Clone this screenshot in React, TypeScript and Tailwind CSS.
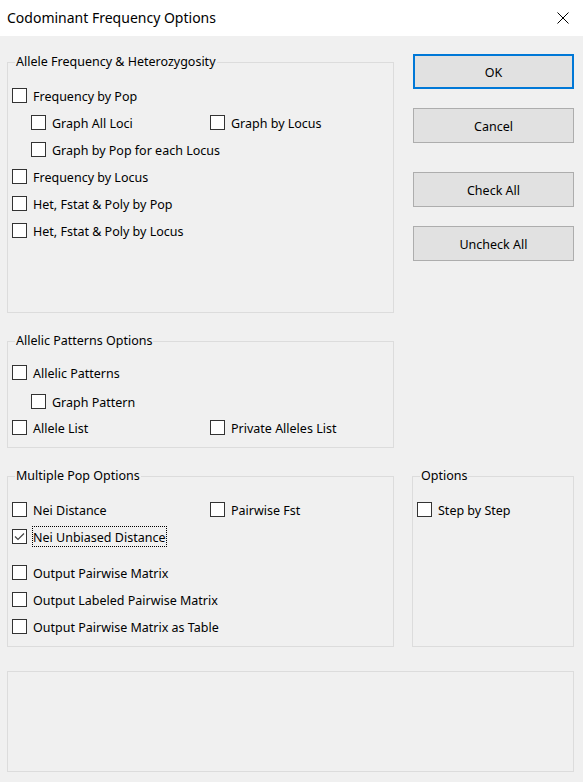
import React from 'react';

const font = { fontFamily: '"Noto Sans", "Open Sans", sans-serif' };

const Box = ({ checked = false }: { checked?: boolean }) => (
  <span className="w-[15px] h-[15px] shrink-0 border border-[#333333] bg-white flex items-center justify-center">
    {checked && (
      <svg width="13" height="13" viewBox="0 0 13 13">
        <polyline points="2,6.5 5,9.5 11,3.5" fill="none" stroke="#444444" strokeWidth="1.2" />
      </svg>
    )}
  </span>
);

const Check = ({ label, checked = false, focused = false }: { label: string; checked?: boolean; focused?: boolean }) => (
  <div className="flex items-center">
    <Box checked={checked} />
    {focused ? (
      <span className="ml-[5px] border border-dotted border-black leading-[17px] pt-[2px] pr-[1px] whitespace-nowrap">{label}</span>
    ) : (
      <span className="ml-[6px] leading-[15px] pt-[2px] whitespace-nowrap">{label}</span>
    )}
  </div>
);

const Group = ({ title, className, children }: { title: string; className: string; children?: React.ReactNode }) => (
  <div className={`relative border border-[#dcdcdc] pl-[4px] ${className}`}>
    <span className="absolute left-[7px] -top-[9px] px-[1px] bg-[#f0f0f0] leading-[15px] whitespace-nowrap">{title}</span>
    {children}
  </div>
);

const Btn = ({ label, primary = false, className = '' }: { label: string; primary?: boolean; className?: string }) => (
  <button
    className={`ml-[1px] w-[161px] h-[35px] pt-[3px] bg-[#e1e1e1] flex items-center justify-center ${
      primary ? 'border-2 border-[#0078d7]' : 'border border-[#adadad]'
    } ${className}`}
  >
    {label}
  </button>
);

const Row = ({ children, className = '' }: { children: React.ReactNode; className?: string }) => (
  <div className={`h-[27px] flex items-center ${className}`}>{children}</div>
);

export default function App() {
  return (
    <div className="w-[583px] h-[782px] bg-[#f0f0f0] text-[12.5px] text-black overflow-hidden" style={font}>
      {/* title bar */}
      <div className="h-[36px] bg-white flex items-center justify-between pl-[7px] pr-[14px]">
        <span className="text-[14px] leading-[20px]">Codominant Frequency Options</span>
        <svg width="12" height="12" viewBox="0 0 12 12" className="mb-[1px]">
          <path d="M0.5 0.5 L11.5 11.5 M11.5 0.5 L0.5 11.5" stroke="#000" strokeWidth="1" />
        </svg>
      </div>

      <div className="pl-[7px] pr-[9px]">
        <div className="grid grid-cols-[387px_162px] gap-x-[18px] gap-y-[28px] items-start">
          <Group title="Allele Frequency & Heterozygosity" className="mt-[26px] h-[251px] pt-[19px]">
            <Row><Check label="Frequency by Pop" /></Row>
            <Row className="pl-[19px]">
              <div className="w-[179px]"><Check label="Graph All Loci" /></div>
              <Check label="Graph by Locus" />
            </Row>
            <Row className="pl-[19px]"><Check label="Graph by Pop for each Locus" /></Row>
            <Row><Check label="Frequency by Locus" /></Row>
            <Row><Check label="Het, Fstat & Poly by Pop" /></Row>
            <Row><Check label="Het, Fstat & Poly by Locus" /></Row>
          </Group>

          <div className="mt-[18px] flex flex-col">
            <Btn label="OK" primary />
            <Btn label="Cancel" className="mt-[19px]" />
            <Btn label="Check All" className="mt-[29px]" />
            <Btn label="Uncheck All" className="mt-[19px]" />
          </div>

          <Group title="Allelic Patterns Options" className="h-[107px] pt-[17px]">
            <Row><Check label="Allelic Patterns" /></Row>
            <Row className="pl-[19px] mt-[2px]"><Check label="Graph Pattern" /></Row>
            <Row className="-mt-[1px]">
              <div className="w-[198px]"><Check label="Allele List" /></div>
              <Check label="Private Alleles List" />
            </Row>
          </Group>
          <div />

          <Group title="Multiple Pop Options" className="h-[171px] pt-[19px]">
            <Row>
              <div className="w-[198px]"><Check label="Nei Distance" /></div>
              <Check label="Pairwise Fst" />
            </Row>
            <Row><Check label="Nei Unbiased Distance" checked focused /></Row>
            <Row className="mt-[9px]"><Check label="Output Pairwise Matrix" /></Row>
            <Row><Check label="Output Labeled Pairwise Matrix" /></Row>
            <Row><Check label="Output Pairwise Matrix as Table" /></Row>
          </Group>

          <Group title="Options" className="h-[171px] pt-[19px]">
            <Row><Check label="Step by Step" /></Row>
          </Group>
        </div>

        <div className="mt-[24px] h-[101px] border border-[#dcdcdc]" />
      </div>
    </div>
  );
}
